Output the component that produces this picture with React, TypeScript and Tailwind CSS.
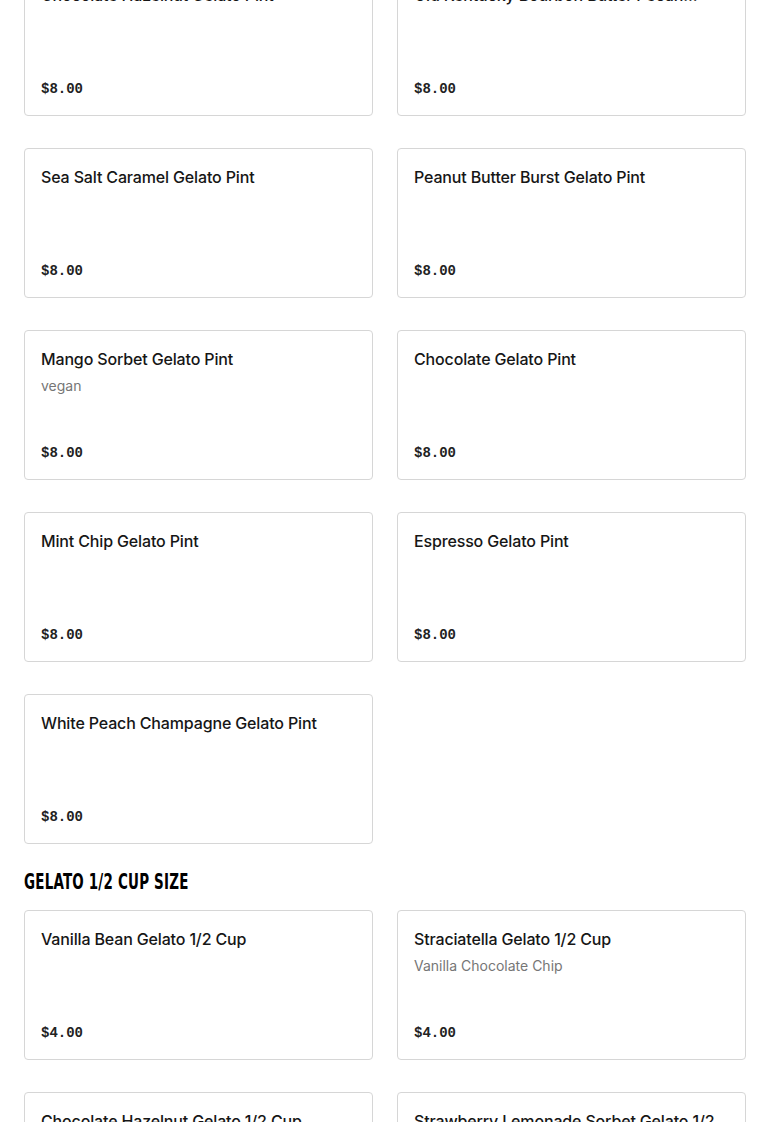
import React from 'react';

interface Item {
  name: string;
  description?: string;
  price: string;
}

const pints: Item[] = [
  { name: 'Chocolate Hazelnut Gelato Pint', price: '$8.00' },
  { name: 'Old Kentucky Bourbon Butter Pecan...', price: '$8.00' },
  { name: 'Sea Salt Caramel Gelato Pint', price: '$8.00' },
  { name: 'Peanut Butter Burst Gelato Pint', price: '$8.00' },
  { name: 'Mango Sorbet Gelato Pint', description: 'vegan', price: '$8.00' },
  { name: 'Chocolate Gelato Pint', price: '$8.00' },
  { name: 'Mint Chip Gelato Pint', price: '$8.00' },
  { name: 'Espresso Gelato Pint', price: '$8.00' },
  { name: 'White Peach Champagne Gelato Pint', price: '$8.00' },
];

const halfCups: Item[] = [
  { name: 'Vanilla Bean Gelato 1/2 Cup', price: '$4.00' },
  { name: 'Straciatella Gelato 1/2 Cup', description: 'Vanilla Chocolate Chip', price: '$4.00' },
  { name: 'Chocolate Hazelnut Gelato 1/2 Cup', price: '$4.00' },
  { name: 'Strawberry Lemonade Sorbet Gelato 1/2 Cup', price: '$4.00' },
];

const MenuCard: React.FC<{ item: Item }> = ({ item }) => (
  <div className="h-[150px] border border-[#d6d6d6] rounded-[4px] bg-white px-4 pt-4 pb-4 flex flex-col">
    <h3 className="text-[16px] leading-6 font-medium text-[#161616] tracking-[-0.15px] line-clamp-2 font-['Inter',sans-serif]">
      {item.name}
    </h3>
    {item.description && (
      <p className="mt-[5px] text-[14px] leading-5 text-[#767676] font-['Inter',sans-serif]">{item.description}</p>
    )}
    <p className="mt-auto text-[14px] leading-5 font-bold text-[#222] font-['Liberation_Mono',monospace]">
      {item.price}
    </p>
  </div>
);

const App: React.FC = () => {
  return (
    <div className="min-h-screen bg-white overflow-hidden">
      <div className="px-6 -mt-[34px]">
        {/* Pints */}
        <div className="grid grid-cols-2 gap-x-6 gap-y-8">
          {pints.map((item) => (
            <MenuCard key={item.name} item={item} />
          ))}
        </div>

        {/* Half cup section */}
        <h2 className="mt-[24px] mb-[14px] h-[28px] leading-[28px] text-black">
          <span className="inline-block origin-left scale-x-[0.68] text-[22px] font-bold uppercase tracking-[0.3px] font-['DejaVu_Sans_Condensed','DejaVu_Sans',sans-serif] whitespace-nowrap">
            Gelato 1/2 Cup Size
          </span>
        </h2>
        <div className="grid grid-cols-2 gap-x-6 gap-y-8 pb-10">
          {halfCups.map((item) => (
            <MenuCard key={item.name} item={item} />
          ))}
        </div>
      </div>
    </div>
  );
};

export default App;
